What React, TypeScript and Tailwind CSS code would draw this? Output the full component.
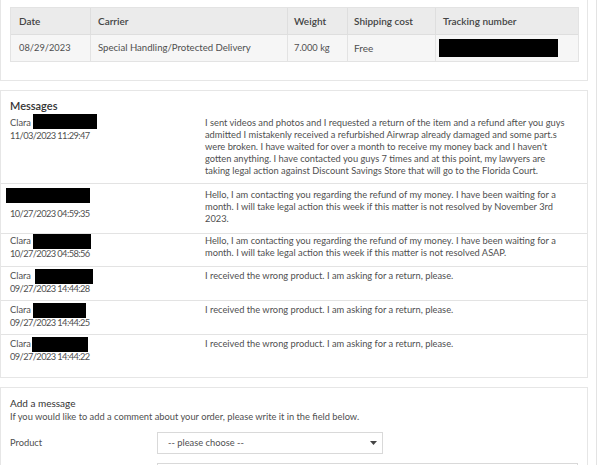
import React from "react";

type Msg = {
  name: string;
  box: { w: number; ml: number; mt: number };
  hideName?: boolean;
  date: string;
  lines: string[];
  h: number;
  pt: number;
};

const messages: Msg[] = [
  {
    name: "Clara",
    box: { w: 64, ml: 2, mt: -3 },
    date: "11/03/2023 11:29:47",
    lines: [
      "I sent videos and photos and I requested a return of the item and a refund after you guys",
      "admitted I mistakenly received a refurbished Airwrap already damaged and some part.s",
      "were broken. I have waited for over a month to receive my money back and I haven't",
      "gotten anything. I have contacted you guys 7 times and at this point, my lawyers are",
      "taking legal action against Discount Savings Store that will go to the Florida Court.",
    ],
    h: 71,
    pt: 4,
  },
  {
    name: "",
    hideName: true,
    box: { w: 84, ml: -4, mt: -1 },
    date: "10/27/2023 04:59:35",
    lines: [
      "Hello, I am contacting you regarding the refund of my money. I have been waiting for a",
      "month. I will take legal action this week if this matter is not resolved by November 3rd",
      "2023.",
    ],
    h: 50,
    pt: 5,
  },
  {
    name: "Clara",
    box: { w: 58, ml: 2, mt: -1 },
    date: "10/27/2023 04:58:56",
    lines: [
      "Hello, I am contacting you regarding the refund of my money. I have been waiting for a",
      "month. I will take legal action this week if this matter is not resolved ASAP.",
    ],
    h: 33,
    pt: 1,
  },
  {
    name: "Clara",
    box: { w: 58, ml: 4, mt: -1 },
    date: "09/27/2023 14:44:28",
    lines: ["I received the wrong product. I am asking for a return, please."],
    h: 34,
    pt: 3,
  },
  {
    name: "Clara",
    box: { w: 53, ml: 2, mt: -1 },
    date: "09/27/2023 14:44:25",
    lines: ["I received the wrong product. I am asking for a return, please."],
    h: 34,
    pt: 3,
  },
  {
    name: "Clara",
    box: { w: 56, ml: 1, mt: -1 },
    date: "09/27/2023 14:44:22",
    lines: ["I received the wrong product. I am asking for a return, please."],
    h: 34,
    pt: 3,
  },
];

export default function App() {
  return (
    <div
      className="w-[600px] h-[465px] overflow-hidden bg-white flex text-[#4f4f4f] text-[9.3px] leading-[12px]"
      style={{ fontFamily: "Lato, 'Liberation Sans', sans-serif" }}
    >
      <div className="w-[588px] shrink-0 flex flex-col">
        {/* shipping card */}
        <div className="h-[81px] shrink-0 border-l border-r border-b border-[#e6e6e6] pt-[7px] pl-[9px]">
          <div className="w-[569px] border border-[#e3e3e3] text-[10px]">
            <div className="flex h-[27px] bg-[#ebebeb] items-center font-semibold text-[#444] border-b border-[#dedede]">
              <div className="w-[79px] pl-[8px]">Date</div>
              <div className="w-[197px] pl-[7px] h-full flex items-center border-l border-[#dedede]">Carrier</div>
              <div className="w-[60px] pl-[6px] h-full flex items-center border-l border-[#dedede]">Weight</div>
              <div className="w-[88px] pl-[6px] h-full flex items-center border-l border-[#dedede]">Shipping cost</div>
              <div className="flex-1 pl-[7px] h-full flex items-center border-l border-[#dedede]">Tracking number</div>
            </div>
            <div className="flex h-[26px] bg-[#f6f6f6] items-center">
              <div className="w-[79px] pl-[8px] text-[9.3px]">08/29/2023</div>
              <div className="w-[197px] pl-[7px] h-full flex items-center border-l border-[#e3e3e3] text-[9.6px]">Special Handling/Protected Delivery</div>
              <div className="w-[60px] pl-[6px] h-full flex items-center border-l border-[#e3e3e3] text-[9.3px]">7.000 kg</div>
              <div className="w-[88px] pl-[6px] h-full flex items-center border-l border-[#e3e3e3]">Free</div>
              <div className="flex-1 pl-[3px] h-full flex items-center border-l border-[#e3e3e3]">
                <div className="w-[119px] h-[18px] bg-black" />
              </div>
            </div>
          </div>
        </div>

        {/* messages card */}
        <div className="mt-[9px] h-[288px] shrink-0 border border-[#e6e6e6]">
          <div className="pl-[9px] pt-[9px] h-[22px] text-[11px] leading-[12px] font-semibold text-[#333]">Messages</div>
          {messages.map((m, i) => (
            <div
              key={i}
              className={`flex ${i < messages.length - 1 ? "border-b border-[#e3e3e3]" : ""}`}
              style={{ height: m.h, paddingTop: m.pt }}
            >
              <div className="w-[204px] pl-[9px] shrink-0">
                <div className="flex items-start h-[12px]">
                  {!m.hideName && <span>{m.name}</span>}
                  <span
                    className="inline-block h-[15px] bg-black"
                    style={{ width: m.box.w, marginLeft: m.box.ml, marginTop: m.box.mt }}
                  />
                </div>
                <div className={`tracking-[-0.6px] ${m.hideName ? "mt-[7px]" : "mt-[1px]"}`}>{m.date}</div>
              </div>
              <div>
                {m.lines.map((l, j) => (
                  <div key={j} className="whitespace-nowrap">
                    {l}
                  </div>
                ))}
              </div>
            </div>
          ))}
        </div>

        {/* add a message */}
        <div className="mt-[9px] flex-1 shrink-0 border border-[#e6e6e6] pl-[9px] pt-[9px]">
          <div className="text-[10px] text-[#333] h-[13px]">Add a message</div>
          <div className="mt-[1px]">If you would like to add a comment about your order, please write it in the field below.</div>
          <div className="flex items-center mt-[9px]">
            <div className="w-[147px]">Product</div>
            <div className="w-[226px] h-[22px] border border-[#d9d9d9] flex items-center justify-between pl-[10px] pr-[5px]">
              <span>-- please choose --</span>
              <svg width="7" height="4" viewBox="0 0 7 4">
                <path d="M0 0 L7 0 L3.5 4 Z" fill="#444" />
              </svg>
            </div>
          </div>
          <div className="ml-[147px] mt-[9px] w-[421px] h-[30px] border border-[#d9d9d9]" />
        </div>
      </div>
      <div className="ml-[8px] w-[1px] bg-[#e3e3e3]" />
    </div>
  );
}
